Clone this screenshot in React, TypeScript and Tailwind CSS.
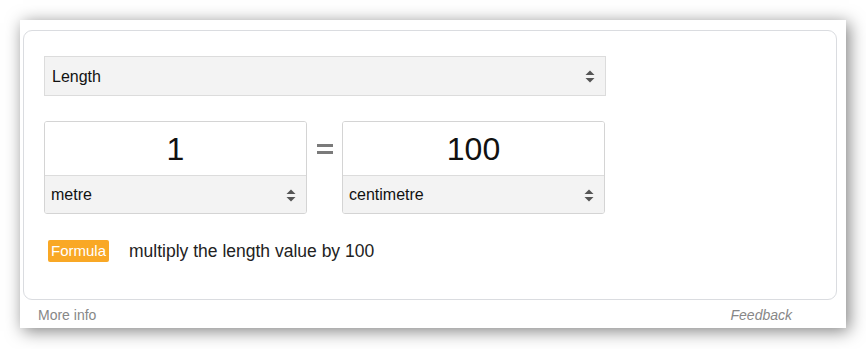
import React from "react";

function Arrows() {
  return (
    <svg width="10" height="13" viewBox="0 0 10 13" className="shrink-0">
      <path d="M0.5 5 L5 0.5 L9.5 5 Z" fill="#555" />
      <path d="M0.5 8 L5 12.5 L9.5 8 Z" fill="#555" />
    </svg>
  );
}

function UnitBox({ value, unit }: { value: string; unit: string }) {
  return (
    <div className="w-[263px] h-[93px] border border-[#d4d4d4] rounded-[3px] flex flex-col overflow-hidden">
      <div className="h-[54px] bg-white flex items-center justify-center text-[32px] text-[#111] border-b border-[#dcdcdc]">
        {value}
      </div>
      <div className="flex-1 bg-[#f3f3f3] flex items-center justify-between pl-[6px] pr-[10px] pt-[1px] text-[16px] text-[#111]">
        <span>{unit}</span>
        <Arrows />
      </div>
    </div>
  );
}

export default function App() {
  return (
    <div className="w-[866px] h-[349px] bg-white pt-[20px] pl-[20px] font-['Liberation_Sans',Arial,sans-serif]">
      <div className="w-[826px] h-[308px] bg-white shadow-[3px_3px_16px_rgba(0,0,0,0.5)] flex flex-col">
        <div className="ml-[3px] mt-[10px] w-[814px] h-[270px] border border-[#dadce0] rounded-[9px] pl-[20px] pt-[25px]">
          <div className="w-[562px] h-[40px] bg-[#f3f3f3] border border-[#dcdcdc] flex items-center justify-between pl-[7px] pr-[10px] pt-[1px] text-[16px] text-[#111]">
            <span>Length</span>
            <Arrows />
          </div>
          <div className="flex items-start mt-[25px]">
            <UnitBox value="1" unit="metre" />
            <div className="w-[35px] h-[54px] flex items-center justify-center">
              <div className="flex flex-col gap-[4px] mt-[2px]">
                <div className="w-[16px] h-[3px] bg-[#7a7a7a]" />
                <div className="w-[16px] h-[3px] bg-[#7a7a7a]" />
              </div>
            </div>
            <UnitBox value="100" unit="centimetre" />
          </div>
          <div className="flex items-center mt-[24px] ml-[4px]">
            <span className="h-[22px] px-[3px] bg-[#f9a825] text-white text-[15px] rounded-[2px] flex items-center">
              Formula
            </span>
            <span className="ml-[20px] text-[17.5px] text-[#222]">multiply the length value by 100</span>
          </div>
        </div>
        <div className="flex justify-between items-center pl-[18px] pr-[54px] pt-[3px] h-[28px] text-[14px] text-[#878787]">
          <span>More info</span>
          <span className="italic">Feedback</span>
        </div>
      </div>
    </div>
  );
}
